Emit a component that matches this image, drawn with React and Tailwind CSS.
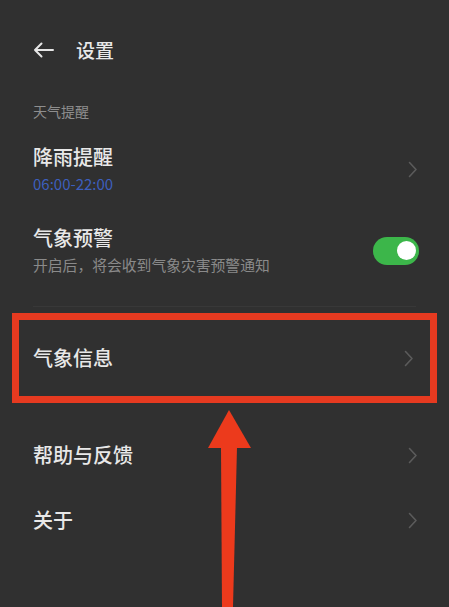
function Chevron() {
  return (
    <svg width="10" height="17" viewBox="0 0 10 17" fill="none">
      <path d="M1.5 1.5 L8 8.5 L1.5 15.5" stroke="#5b5b5b" strokeWidth="1.6" strokeLinecap="round" strokeLinejoin="round" />
    </svg>
  )
}

export default function App() {
  return (
    <div
      className="relative w-[449px] h-[607px] overflow-hidden bg-[#303030]"
      style={{ fontFamily: '"Noto Sans CJK SC", "Noto Sans", sans-serif' }}
    >
      {/* Header */}
      <div className="h-[100px] flex items-center px-[33px]">
        <svg width="21" height="16" viewBox="0 0 21 16" fill="none">
          <path d="M20 8 H2 M8.5 1.5 L2 8 L8.5 14.5" stroke="#e6e6e6" strokeWidth="2" strokeLinecap="round" strokeLinejoin="round" />
        </svg>
        <span className="ml-[22px] text-[19px] leading-[24px] font-medium text-[#e8e8e8]">设置</span>
      </div>

      {/* Section label */}
      <div className="h-[22px] flex items-center px-[33px] text-[14px] text-[#8e8e8e]">天气提醒</div>

      {/* 降雨提醒 */}
      <div className="flex items-center justify-between pl-[33px] pr-[31px] py-[23px]">
        <div className="flex flex-col">
          <span className="text-[20px] leading-[24px] font-medium text-[#e8e8e8]">降雨提醒</span>
          <span className="mt-[5px] text-[15px] leading-[20px] text-[#3d5fbd]">06:00-22:00</span>
        </div>
        <Chevron />
      </div>

      {/* 气象预警 */}
      <div className="flex items-center justify-between pl-[33px] pr-[30px] pt-[9px]">
        <div className="flex flex-col">
          <span className="text-[20px] leading-[24px] font-medium text-[#e8e8e8]">气象预警</span>
          <span className="mt-[5px] text-[14.8px] leading-[20px] text-[#8a8a8a]">开启后，将会收到气象灾害预警通知</span>
        </div>
        <div className="w-[46px] h-[28px] rounded-full bg-[#3cb64a] flex items-center justify-end pr-[3px]">
          <div className="w-[19px] h-[19px] rounded-full bg-white"></div>
        </div>
      </div>

      <div className="mt-[31px] mx-[33px] h-px bg-[#383838]"></div>

      {/* 气象信息 (highlighted) */}
      <div className="mt-[6px] mx-[12px] h-[90px] border-[7px] border-[#e63a20] flex items-center justify-between pl-[14px] pr-[16px]">
        <span className="text-[20px] leading-[24px] font-medium text-[#e8e8e8]">气象信息</span>
        <Chevron />
      </div>

      <div className="mt-[20px] h-[64px] flex items-center justify-between pl-[33px] pr-[31px]">
        <span className="text-[20px] leading-[24px] font-medium text-[#e8e8e8]">帮助与反馈</span>
        <Chevron />
      </div>

      <div className="h-[66px] flex items-center justify-between pl-[33px] pr-[31px]">
        <span className="text-[20px] leading-[24px] font-medium text-[#e8e8e8]">关于</span>
        <Chevron />
      </div>

      {/* Annotation arrow */}
      <svg className="absolute left-0 top-0" width="449" height="607" viewBox="0 0 449 607">
        <polygon points="208,448 229,410 251,448" fill="#ec3a1c" />
        <polygon points="221,447 237,447 233,607 222,607" fill="#ec3a1c" />
      </svg>
    </div>
  )
}
